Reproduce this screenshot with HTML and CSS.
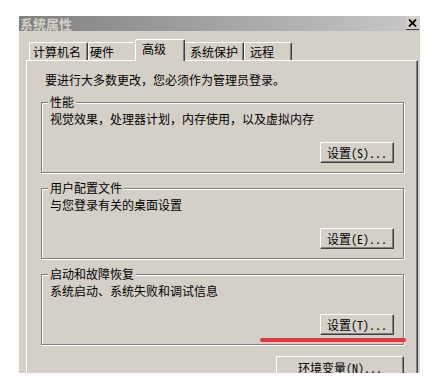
FILE: index.html
```html
<!DOCTYPE html>
<html lang="zh-CN">
<head>
  <meta charset="UTF-8" />
  <title>系统属性</title>
  <link rel="stylesheet" href="styles.css">
</head>
<body>

  <div class="window">
    <div class="titlebar">
      <span class="title">系统属性</span>
      <span class="close">
        <svg width="9" height="8" viewBox="0 0 9 8"><path d="M1 0.5 L8 7.5 M8 0.5 L1 7.5" stroke="#000" stroke-width="1.8" fill="none"/></svg>
      </span>
    </div>

    <!-- TABS -->
    <div class="tabs">
      <div class="tab t1">计算机名</div>
      <div class="tab t2">硬件</div>
      <div class="tab active">高级</div>
      <div class="tab t4">系统保护</div>
      <div class="tab t5">远程</div>
    </div>

    <div class="panel">
      <div class="intro">要进行大多数更改，您必须作为管理员登录。</div>

      <fieldset class="group">
        <legend>性能</legend>
        <div class="desc">视觉效果，处理器计划，内存使用，以及虚拟内存</div>
        <div class="btn-row"><button class="btn">设置(S)...</button></div>
      </fieldset>

      <fieldset class="group">
        <legend>用户配置文件</legend>
        <div class="desc">与您登录有关的桌面设置</div>
        <div class="btn-row"><button class="btn">设置(E)...</button></div>
      </fieldset>

      <fieldset class="group">
        <legend>启动和故障恢复</legend>
        <div class="desc">系统启动、系统失败和调试信息</div>
        <div class="btn-row"><button class="btn">设置(T)...</button></div>
      </fieldset>

      <div class="btn-row env-row"><button class="btn btn-wide">环境变量(N)...</button></div>

      <div class="mark"></div>
    </div>
  </div>

</body>
</html>
```

FILE: styles.css
```css
body {
  margin: 0;
  background: #fff;
  font-family: "Noto Sans Mono CJK SC", "Noto Sans CJK SC", sans-serif;
  font-size: 12px;
  color: #000;
}

.window {
  margin: 16px 0 0 19px;
  width: 401px;
  height: 357px;
  background: #d4d0c8;
}

.titlebar {
  height: 15px;
  display: flex;
  align-items: center;
  justify-content: space-between;
  background: linear-gradient(to right, #808080, #c8c8c8);
}

.title {
  font-family: "Noto Sans CJK SC", sans-serif;
  font-weight: bold;
  font-size: 13px;
  line-height: 15px;
  color: #d4d0c8;
  padding-left: 1px;
}

.close {
  width: 13px;
  height: 13px;
  margin-right: 1px;
  align-self: flex-start;
  display: flex;
  align-items: center;
  justify-content: center;
  background: #d4d0c8;
  border-bottom: 1px solid #404040;
}

/* tabs */
.tabs {
  display: flex;
  align-items: flex-end;
  height: 21px;
  margin-top: 8px;
  padding-left: 10px;
}

.tab {
  box-sizing: border-box;
  height: 18px;
  line-height: 17px;
  border-top: 1px solid #fff;
  border-left: 1px solid #fff;
  border-right: 1px solid #404040;
  box-shadow: inset -1px 0 0 #808080;
  border-radius: 2px 2px 0 0;
  padding-left: 3px;
  white-space: nowrap;
}

.t1 { width: 59px; }
.t2 { width: 49px; padding-left: 1px; }
.t4 { width: 61px; padding-left: 6px; }
.t5 { width: 48px; padding-left: 5px; }

.tab.active {
  position: relative;
  z-index: 1;
  width: 50px;
  height: 22px;
  margin: 0 -2px -1px;
  padding-left: 6px;
  padding-bottom: 4px;
  background: #d4d0c8;
}

/* panel, its bottom edge is outside the shot */
.panel {
  position: relative;
  box-sizing: border-box;
  width: 392px;
  height: 313px;
  margin-left: 7px;
  padding: 12px 13px 0 14px;
  border-top: 1px solid #fff;
  border-left: 1px solid #fff;
  border-right: 1px solid #404040;
  box-shadow: inset -1px 0 0 #808080;
}

.intro {
  line-height: 14px;
  margin: 0 0 8px 4px;
}

.group {
  margin: 0 0 7px;
  padding: 0 9px 9px 8px;
  min-width: 0;
  border: 1px solid #808080;
  box-shadow: 1px 1px 0 #fff, inset 1px 1px 0 #fff;
}

.group + .group {
  margin-top: 8px;
}

.group legend {
  padding: 0 2px;
  margin-left: -2px;
  line-height: 14px;
  background: #d4d0c8;
}

.desc {
  line-height: 14px;
  margin-top: 3px;
}

.btn-row {
  display: flex;
  justify-content: flex-end;
  margin-top: 16px;
}

.btn {
  box-sizing: border-box;
  width: 74px;
  height: 21px;
  padding: 0;
  font-family: inherit;
  font-size: 12px;
  line-height: 19px;
  color: #000;
  background: #d4d0c8;
  border: 1px solid;
  border-color: #fff #404040 #404040 #fff;
  box-shadow: inset -1px -1px 0 #808080;
}

.env-row {
  margin-top: 11px;
}

/* only the top part of this button is inside the shot */
.btn-wide {
  width: 128px;
  height: 18px;
  padding-top: 4px;
  line-height: 12px;
  border-bottom: none;
  box-shadow: inset -1px 0 0 #808080;
}

/* red annotation stroke */
.mark {
  position: absolute;
  left: 233px;
  top: 277px;
  width: 146px;
  height: 4px;
  border-radius: 2px;
  background: #e8343f;
}
```
